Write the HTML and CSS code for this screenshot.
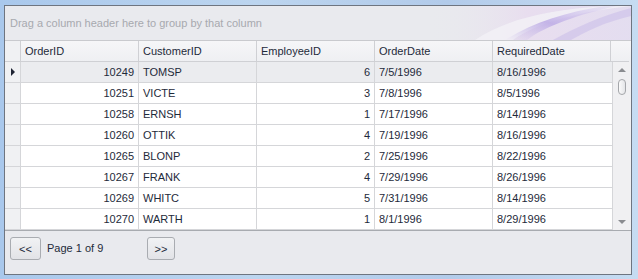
FILE: index.html
```html
<!DOCTYPE html>
<html lang="en">
<head>
    <meta charset="UTF-8">
    <title>Orders Grid</title>
    <link rel="stylesheet" href="styles.css">
</head>
<body>

<div class="grid-window">
    <div class="group-panel">
        <svg class="swoosh" width="626" height="34" viewBox="0 0 626 34">
            <defs>
                <linearGradient id="band" x1="0" y1="1" x2="1" y2="0">
                    <stop offset="0" stop-color="#c9bce8" stop-opacity="0"/>
                    <stop offset="0.45" stop-color="#bfaee6" stop-opacity="0.9"/>
                    <stop offset="1" stop-color="#d9cff0" stop-opacity="0.3"/>
                </linearGradient>
                <linearGradient id="haze" x1="0" y1="0" x2="1" y2="0">
                    <stop offset="0" stop-color="#e9eaee" stop-opacity="0"/>
                    <stop offset="0.5" stop-color="#e8dcef" stop-opacity="0.9"/>
                    <stop offset="1" stop-color="#e3dcf0" stop-opacity="0.9"/>
                </linearGradient>
            </defs>
            <rect x="420" y="0" width="206" height="34" fill="url(#haze)"/>
            <path d="M470 34 C 500 14, 540 4, 600 0 L 626 0 C 570 6, 530 18, 508 34 Z" fill="#f3f1f6" opacity="0.8"/>
            <path d="M500 34 C 525 18, 560 6, 600 0 L 612 0 C 575 8, 540 20, 522 34 Z" fill="url(#band)"/>
            <path d="M548 34 C 570 22, 595 10, 626 2 L 626 10 C 600 16, 580 26, 566 34 Z" fill="#cfc3ea" opacity="0.7"/>
        </svg>
        <span class="group-text">Drag a column header here to group by that column</span>
    </div>

    <div class="grid-body">
        <div class="row header">
            <div class="cell indicator"></div>
            <div class="cell">OrderID</div>
            <div class="cell">CustomerID</div>
            <div class="cell">EmployeeID</div>
            <div class="cell">OrderDate</div>
            <div class="cell">RequiredDate</div>
            <div class="cell corner"></div>
        </div>
        <div class="rows-area">
            <div class="rows">
                <div class="row focused">
                    <div class="cell indicator"><span class="arrow"></span></div>
                    <div class="cell num">10249</div>
                    <div class="cell">TOMSP</div>
                    <div class="cell num">6</div>
                    <div class="cell">7/5/1996</div>
                    <div class="cell">8/16/1996</div>
                </div>
                <div class="row">
                    <div class="cell indicator"></div>
                    <div class="cell num">10251</div>
                    <div class="cell">VICTE</div>
                    <div class="cell num">3</div>
                    <div class="cell">7/8/1996</div>
                    <div class="cell">8/5/1996</div>
                </div>
                <div class="row">
                    <div class="cell indicator"></div>
                    <div class="cell num">10258</div>
                    <div class="cell">ERNSH</div>
                    <div class="cell num">1</div>
                    <div class="cell">7/17/1996</div>
                    <div class="cell">8/14/1996</div>
                </div>
                <div class="row">
                    <div class="cell indicator"></div>
                    <div class="cell num">10260</div>
                    <div class="cell">OTTIK</div>
                    <div class="cell num">4</div>
                    <div class="cell">7/19/1996</div>
                    <div class="cell">8/16/1996</div>
                </div>
                <div class="row">
                    <div class="cell indicator"></div>
                    <div class="cell num">10265</div>
                    <div class="cell">BLONP</div>
                    <div class="cell num">2</div>
                    <div class="cell">7/25/1996</div>
                    <div class="cell">8/22/1996</div>
                </div>
                <div class="row">
                    <div class="cell indicator"></div>
                    <div class="cell num">10267</div>
                    <div class="cell">FRANK</div>
                    <div class="cell num">4</div>
                    <div class="cell">7/29/1996</div>
                    <div class="cell">8/26/1996</div>
                </div>
                <div class="row">
                    <div class="cell indicator"></div>
                    <div class="cell num">10269</div>
                    <div class="cell">WHITC</div>
                    <div class="cell num">5</div>
                    <div class="cell">7/31/1996</div>
                    <div class="cell">8/14/1996</div>
                </div>
                <div class="row">
                    <div class="cell indicator"></div>
                    <div class="cell num">10270</div>
                    <div class="cell">WARTH</div>
                    <div class="cell num">1</div>
                    <div class="cell">8/1/1996</div>
                    <div class="cell">8/29/1996</div>
                </div>
            </div>
            <div class="scrollbar">
                <span class="scroll-up"></span>
                <span class="thumb"></span>
                <span class="scroll-down"></span>
            </div>
        </div>
    </div>

    <div class="pager">
        <button class="pager-btn prev">&lt;&lt;</button>
        <span class="page-info">Page 1 of 9</span>
        <button class="pager-btn next">&gt;&gt;</button>
    </div>
</div>

</body>
</html>
```

FILE: styles.css
```css
body {
    margin: 0;
    padding: 5px 0 0 4px;
    height: 279px;
    box-sizing: border-box;
    background: linear-gradient(90deg, #a9c8ec 0, #bcd5ef 40%, #b2cbea 70%, #c6dcf2 100%);
    font-family: "Liberation Sans", Arial, sans-serif;
    font-size: 11px;
    color: #1e2a3a;
    overflow: hidden;
}

.grid-window {
    width: 628px;
    height: 270px;
    box-sizing: border-box;
    border: 1px solid #6e7580;
    background: #e9eaee;
    display: flex;
    flex-direction: column;
}

/* group by panel */
.group-panel {
    height: 34px;
    position: relative;
    display: flex;
    align-items: center;
    padding-left: 5px;
    color: #a7a9ae;
    background: #e9eaee;
}

.swoosh {
    position: absolute;
    left: 0;
    top: 0;
}

.group-text {
    position: relative;
}

.grid-body {
    border-top: 1px solid #c9cace;
    border-bottom: 1px solid #a8abb0;
    background: #fff;
}

.row {
    display: flex;
    height: 21px;
}

.cell {
    width: 118px;
    box-sizing: border-box;
    border-right: 1px solid #d5d6d9;
    border-bottom: 1px solid #d5d6d9;
    padding: 0 4px;
    display: flex;
    align-items: center;
    white-space: nowrap;
}

.cell.indicator {
    width: 16px;
    padding: 0;
    background: #f0f1f3;
    justify-content: center;
}

.cell.num {
    justify-content: flex-end;
}

.header {
    background: linear-gradient(#f6f6f8, #eeeff2);
}

.header .cell {
    height: 21px;
    border-color: #cfd0d4;
}

.header .corner {
    width: 18px;
    border-right: none;
}

.rows-area {
    display: flex;
}

.rows .cell:last-child {
    width: 120px;
}

.focused .cell {
    background: #ebecef;
}

.focused .cell.indicator {
    background: #f0f1f3;
}

.arrow {
    width: 0;
    height: 0;
    border-top: 4px solid transparent;
    border-bottom: 4px solid transparent;
    border-left: 4px solid #1e2433;
}

/* vertical scrollbar */
.scrollbar {
    width: 18px;
    background: #f0f0f2;
    position: relative;
}

.scroll-up, .scroll-down {
    position: absolute;
    left: 5px;
    width: 0;
    height: 0;
    border-left: 4px solid transparent;
    border-right: 4px solid transparent;
}

.scroll-up {
    top: 6px;
    border-bottom: 4px solid #8a8c90;
}

.scroll-down {
    bottom: 6px;
    border-top: 4px solid #8a8c90;
}

.thumb {
    position: absolute;
    left: 5px;
    top: 17px;
    width: 6px;
    height: 14px;
    border: 1px solid #a4a6aa;
    border-radius: 4px;
    background: linear-gradient(90deg, #fafafa, #e4e5e8);
}

/* pager */
.pager {
    flex: 1;
    display: flex;
    align-items: flex-start;
    padding: 6px 0 0 5px;
}

.pager-btn {
    height: 23px;
    padding: 0;
    border: 1px solid #a9acb1;
    border-radius: 3px;
    background: linear-gradient(#f1f2f4, #e2e3e7);
    font-family: inherit;
    font-size: 11px;
    color: #1e2a3a;
}

.pager-btn.prev {
    width: 31px;
}

.pager-btn.next {
    width: 28px;
}

.page-info {
    width: 106px;
    box-sizing: border-box;
    padding-left: 6px;
    line-height: 23px;
}
```
